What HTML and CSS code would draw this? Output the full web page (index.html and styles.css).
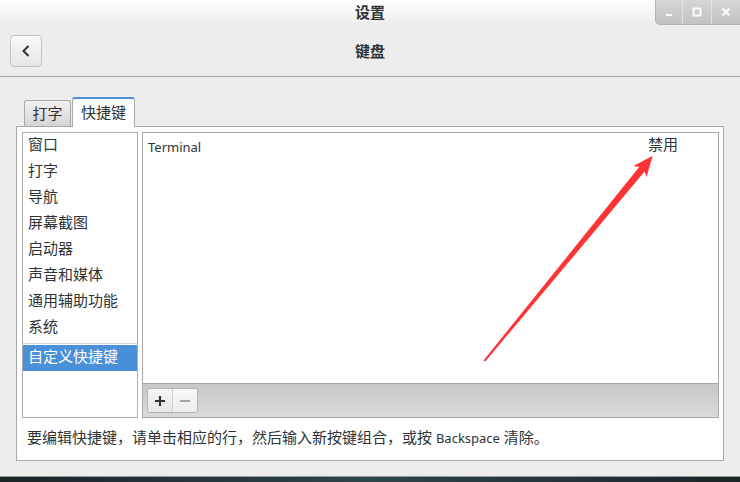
FILE: index.html
```html
<!DOCTYPE html>
<html lang="zh-CN">
<head>
  <meta charset="UTF-8">
  <title>设置 - 键盘</title>
  <link rel="stylesheet" href="styles.css">
</head>
<body>

  <div class="titlebar">
    <div></div>
    <div class="title">设置</div>
    <div class="controls">
      <div class="ctl">
        <svg width="10" height="10" viewBox="0 0 10 10"><rect x="2" y="7" width="6" height="2" fill="#fafafa"/></svg>
      </div>
      <div class="ctl">
        <svg width="10" height="10" viewBox="0 0 10 10"><rect x="1.5" y="1.5" width="7" height="7" fill="none" stroke="#fafafa" stroke-width="2"/></svg>
      </div>
      <div class="ctl">
        <svg width="10" height="10" viewBox="0 0 10 10"><path d="M1.5 1.5 L8.5 8.5 M8.5 1.5 L1.5 8.5" stroke="#fafafa" stroke-width="2.2"/></svg>
      </div>
    </div>
  </div>

  <div class="headerbar">
    <div>
      <button class="back">
        <svg width="12" height="14" viewBox="0 0 12 14"><path d="M8.5 2 L3.5 7 L8.5 12" fill="none" stroke="#2e3436" stroke-width="2"/></svg>
      </button>
    </div>
    <div class="title">键盘</div>
    <div></div>
  </div>

  <div class="content">
    <div class="tabs">
      <div class="tab">打字</div>
      <div class="tab active">快捷键</div>
    </div>

    <div class="frame">
      <div class="panes">
        <div class="categories">
          <div class="cat">窗口</div>
          <div class="cat">打字</div>
          <div class="cat">导航</div>
          <div class="cat">屏幕截图</div>
          <div class="cat">启动器</div>
          <div class="cat">声音和媒体</div>
          <div class="cat">通用辅助功能</div>
          <div class="cat">系统</div>
          <div class="sep"></div>
          <div class="cat selected">自定义快捷键</div>
        </div>

        <div class="shortcuts">
          <div class="rows">
            <div class="row">
              <span class="name">Terminal</span>
              <span class="accel">禁用</span>
            </div>
          </div>
          <div class="toolbar">
            <div class="tool-buttons">
              <div class="tool">
                <svg width="12" height="12" viewBox="0 0 12 12"><path d="M6 1 V11 M1 6 H11" stroke="#2e3436" stroke-width="2.2"/></svg>
              </div>
              <div class="tool">
                <svg width="12" height="12" viewBox="0 0 12 12"><path d="M1 6 H11" stroke="#a4a6a4" stroke-width="2"/></svg>
              </div>
            </div>
          </div>
        </div>
      </div>

      <div class="help">要编辑快捷键，请单击相应的行，然后输入新按键组合，或按 <span class="latin">Backspace</span> 清除。</div>
    </div>
  </div>

  <div class="desktop"></div>

  <!-- red annotation arrow drawn over the window -->
  <svg class="annotation" width="740" height="482" viewBox="0 0 740 482">
    <polygon fill="#ff3535" points="483.5,360.5 485.2,361.6 644.6,171.6 646.5,177 652.7,155.8 633.5,166 639.2,167"/>
  </svg>

</body>
</html>
```

FILE: styles.css
```css
body {
  margin: 0;
  width: 740px;
  height: 482px;
  overflow: hidden;
  position: relative;
  background-color: #ededed;
  color: #2e3436;
  font-family: "Noto Sans", "Noto Sans CJK SC", sans-serif;
  font-size: 15px;
}

.titlebar {
  height: 25px;
  display: grid;
  grid-template-columns: 1fr auto 1fr;
  grid-template-rows: 22px;
  align-items: center;
  background: linear-gradient(#ffffff, #ececec);
}

.title {
  font-weight: bold;
  font-size: 15px;
  color: #2e3436;
}

.controls {
  justify-self: end;
  align-self: start;
  display: flex;
  height: 25px;
  border-bottom-left-radius: 5px;
  overflow: hidden;
  border-left: 1px solid #b4b4b4;
  border-bottom: 1px solid #b4b4b4;
  box-sizing: border-box;
}

.ctl {
  width: 28px;
  display: flex;
  align-items: center;
  justify-content: center;
  background: linear-gradient(#d6d6d6, #c2c2c2);
  border-left: 1px solid #e2e2e2;
}

.ctl:first-child {
  width: 26px;
  border-left: none;
}

.headerbar {
  height: 51px;
  padding: 0 10px;
  border-bottom: 1px solid #a4a4a4;
  display: grid;
  grid-template-columns: 1fr auto 1fr;
  align-items: center;
}

.back {
  width: 32px;
  height: 32px;
  padding: 0;
  border: 1px solid #c2c2c2;
  border-radius: 4px;
  background: linear-gradient(#f9f9f9, #e6e6e6);
  display: flex;
  align-items: center;
  justify-content: center;
}

.content {
  padding: 20px 16px 0;
}

.tabs {
  height: 29px;
  padding-left: 8px;
  display: flex;
  align-items: flex-end;
}

.tab {
  width: 47px;
  height: 26px;
  box-sizing: border-box;
  border: 1px solid #a8a8a8;
  border-bottom: none;
  border-radius: 3px 3px 0 0;
  background: linear-gradient(#f2f2f2, #d4d4d4);
  text-align: center;
  line-height: 24px;
}

.tab.active {
  width: 63px;
  height: 30px;
  margin-left: 1px;
  margin-bottom: -1px;
  position: relative;
  z-index: 1;
  background: #ffffff;
  border-color: #a8a8a8;
  border-top: 2px solid #4a90d9;
  line-height: 27px;
}

.frame {
  height: 335px;
  box-sizing: border-box;
  border: 1px solid #a8a8a8;
  background-color: #ffffff;
  padding: 5px 4px 0 5px;
}

.panes {
  height: 286px;
  display: flex;
  gap: 4px;
}

.categories {
  width: 116px;
  box-sizing: border-box;
  border: 1px solid #b0b0b0;
}

.cat {
  height: 26px;
  box-sizing: border-box;
  line-height: 23px;
  padding: 0 0 3px 5px;
}

.sep {
  height: 1px;
  margin: 2px 0 1px;
  background-color: #d2d2d2;
}

.cat.selected {
  background-color: #4a90d9;
  color: #ffffff;
}

.shortcuts {
  flex: 1;
  border: 1px solid #a8a8a8;
  display: flex;
  flex-direction: column;
}

.rows {
  flex: 1;
  background-color: #ffffff;
}

.row {
  height: 27px;
  padding-left: 5px;
  display: flex;
  align-items: center;
}

.row .name {
  flex: 1;
  font-size: 13px;
}

.row .accel {
  width: 70px;
  padding-bottom: 6px;
}

.toolbar {
  height: 34px;
  box-sizing: border-box;
  padding: 4px 4px;
  border-top: 1px solid #a8a8a8;
  background: linear-gradient(#c8c8c6, #dadad8);
}

.tool-buttons {
  display: inline-flex;
  height: 25px;
  box-sizing: border-box;
  border: 1px solid #b4b4b4;
  border-radius: 3px;
  overflow: hidden;
}

.tool {
  width: 24px;
  display: flex;
  align-items: center;
  justify-content: center;
  background: linear-gradient(#f6f6f6, #e6e6e6);
}

.tool + .tool {
  border-left: 1px solid #d0d0d0;
  background: linear-gradient(#f8f8f8, #ededed);
}

.help {
  height: 42px;
  line-height: 38px;
  padding-left: 5px;
  white-space: nowrap;
}

.latin {
  font-size: 13px;
}

.desktop {
  height: 5px;
  margin-top: 16px;
  background: linear-gradient(90deg, #1b2427, #2e4549 50%, #1b2427);
  box-shadow: 0 -1px 0 #9a9a9a;
}

.annotation {
  position: absolute;
  left: 0;
  top: 0;
  pointer-events: none;
}
```
